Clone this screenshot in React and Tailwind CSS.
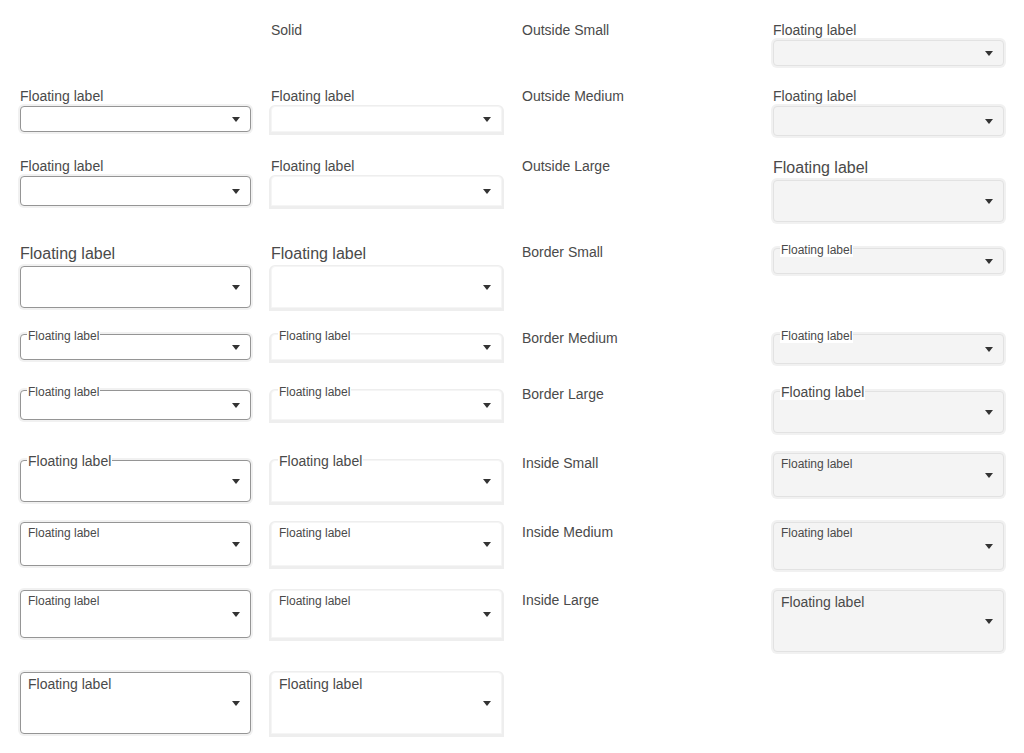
import React from "react";

const boxStyles = {
  A: "bg-white border border-[#959595] rounded-[4px] shadow-[0_0_0_2px_#f1f1f1]",
  B: "bg-white border border-[#f5f5f5] rounded-t-[4px] shadow-[0_1px_0_2px_#eeeeee]",
  C: "bg-[#f4f4f4] border border-[#e2e2e2] rounded-[4px] shadow-[0_0_0_2px_#f1f1f1]",
};

const outsideH = { s: "h-[26px]", m: "h-[30px]", l: "h-[42px]" };
const insideH = { s: "h-[44px]", m: "h-[48px]", l: "h-[62px]" };

function Arrow() {
  return (
    <svg width="8" height="5" viewBox="0 0 8 5" className="shrink-0">
      <polygon points="0,0 8,0 4,5" fill="#333333" />
    </svg>
  );
}

function Box({ v, h, children }) {
  return (
    <div className={`relative flex items-center justify-end pr-[10px] ${h} ${boxStyles[v]}`}>
      {children}
      <Arrow />
    </div>
  );
}

function Outside({ v, size }) {
  const label =
    size === "l" ? "text-[16px] leading-[24px]" : "text-[14px] leading-[20px]";
  return (
    <div className="flex flex-col">
      <div className={`${label} text-[#4a4a4a]`}>Floating label</div>
      <Box v={v} h={outsideH[size]} />
    </div>
  );
}

function Border({ v, size }) {
  const large = size === "l";
  return (
    <div className={large ? "pt-[7px]" : "pt-[6px]"}>
      <Box v={v} h={outsideH[size]}>
        <span
          className={`absolute left-[6px] bg-white px-px text-[#4a4a4a] ${
            large ? "top-[-8px] text-[14px] leading-[16px]" : "top-[-6px] text-[12px] leading-[14px]"
          }`}
        >
          Floating label
        </span>
      </Box>
    </div>
  );
}

function Inside({ v, size }) {
  const large = size === "l";
  return (
    <Box v={v} h={insideH[size]}>
      <span
        className={`absolute left-[7px] text-[#4a4a4a] ${
          large ? "top-[3px] text-[14px] leading-[16px]" : "top-[3px] text-[12px] leading-[14px]"
        }`}
      >
        Floating label
      </span>
    </Box>
  );
}

function Text({ children }) {
  return <div className="text-[14px] leading-[20px] text-[#4a4a4a]">{children}</div>;
}

function Field({ type, v, size }) {
  if (type === "o") return <Outside v={v} size={size} />;
  if (type === "b") return <Border v={v} size={size} />;
  return <Inside v={v} size={size} />;
}

const specs = [
  ["o", "s"],
  ["o", "m"],
  ["o", "l"],
  ["b", "s"],
  ["b", "m"],
  ["b", "l"],
  ["i", "s"],
  ["i", "m"],
  ["i", "l"],
];

const titles = [
  "Outside Small",
  "Outside Medium",
  "Outside Large",
  "Border Small",
  "Border Medium",
  "Border Large",
  "Inside Small",
  "Inside Medium",
  "Inside Large",
];

export default function App() {
  const cells = [];
  cells.push(<div key="e0" />);
  cells.push(<Text key="solid">Solid</Text>);
  cells.push(<Text key="t0">{titles[0]}</Text>);
  cells.push(<Field key="c0" type={specs[0][0]} v="C" size={specs[0][1]} />);
  for (let i = 0; i < 9; i++) {
    cells.push(<Field key={`a${i}`} type={specs[i][0]} v="A" size={specs[i][1]} />);
    cells.push(<Field key={`b${i}`} type={specs[i][0]} v="B" size={specs[i][1]} />);
    if (i < 8) {
      cells.push(<Text key={`t${i + 1}`}>{titles[i + 1]}</Text>);
      cells.push(<Field key={`c${i + 1}`} type={specs[i + 1][0]} v="C" size={specs[i + 1][1]} />);
    }
  }
  return (
    <div
      className="min-h-[753px] bg-white p-5"
      style={{ fontFamily: '"Liberation Sans", Arial, sans-serif' }}
    >
      <div className="grid grid-cols-4 items-start gap-x-5 gap-y-5">{cells}</div>
    </div>
  );
}
